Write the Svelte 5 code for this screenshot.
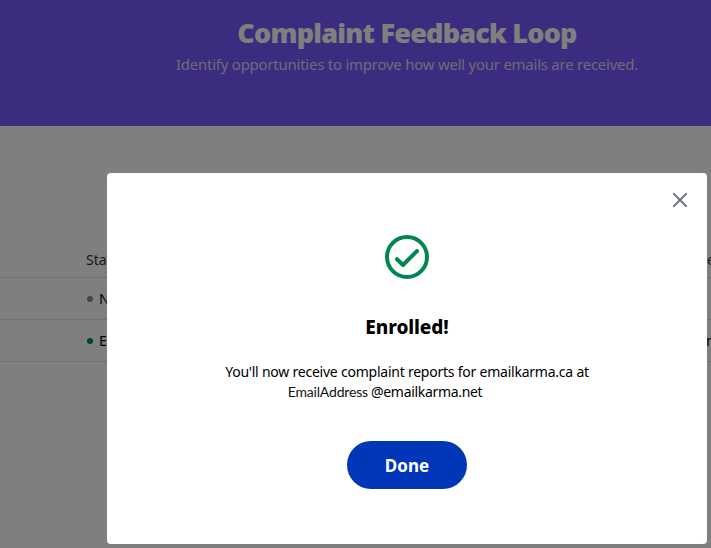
<script>
let open = true;

const rows = [
    { status: 'Not enrolled', enrolled: false, contact: '' },
    { status: 'Enrolled', enrolled: true, contact: 'm' }
];

function close() {
    open = false;
}
</script>

<div class="page">
    <header>
        <h1>Complaint Feedback Loop</h1>
        <p>Identify opportunities to improve how well your emails are received.</p>
    </header>

    <div class="table">
        <div class="row head">
            <span class="status">Status</span>
            <span class="contact">e</span>
        </div>
        {#each rows as row}
            <div class="row">
                <span class="status">
                    <i class="dot" class:enrolled={row.enrolled}></i>{row.status}
                </span>
                <span class="contact">{row.contact}</span>
            </div>
        {/each}
    </div>

    {#if open}
        <div class="overlay">
            <div class="modal" role="dialog" aria-modal="true">
                <button class="close" aria-label="Close" on:click={close}>
                    <svg width="16" height="16" viewBox="0 0 16 16">
                        <path d="M1.3 1.3 14.7 14.7M14.7 1.3 1.3 14.7" fill="none" stroke="#6e7780" stroke-width="2" />
                    </svg>
                </button>
                <svg class="check" width="44" height="44" viewBox="0 0 44 44" fill="none" stroke="#008751" stroke-width="4">
                    <circle cx="22" cy="22" r="20" />
                    <path d="M12 24.2 18 30 32 16" stroke-linecap="round" stroke-linejoin="round" />
                </svg>
                <h2>Enrolled!</h2>
                <p class="message">You'll now receive complaint reports for emailkarma.ca at</p>
                <p class="address"><span class="user">EmailAddress</span><span class="domain">@emailkarma.net</span></p>
                <button class="done" on:click={close}>Done</button>
            </div>
        </div>
    {/if}
</div>

<style>
    .page {
        position: relative;
        width: 100%;
        max-width: 711px;
        height: 548px;
        overflow: hidden;
        background: #fff;
        color: #000;
        font-family: "Noto Sans", sans-serif;
        font-size: 14px;
    }
    h1, h2, p {
        margin: 0;
        white-space: nowrap;
    }
    header {
        box-sizing: border-box;
        height: 126px;
        padding: 14px 0 0 103px;
        background: #7858fe;
        color: #fff;
        text-align: center;
    }
    h1 {
        font-size: 27px;
        font-weight: 900;
        letter-spacing: -0.78px;
        line-height: 38px;
    }
    header p {
        color: #dcd5f5;
        font-size: 15px;
        letter-spacing: -0.25px;
        line-height: 24px;
    }
    .table {
        padding-top: 109px;
    }
    .row {
        box-sizing: border-box;
        display: flex;
        align-items: center;
        height: 42px;
        padding-left: 86px;
        border-bottom: 1px solid #e0e0e4;
    }
    .head {
        height: 43px;
        padding-top: 6px;
        color: #2c363f;
    }
    .status {
        flex: none;
        display: flex;
        align-items: center;
        width: 620px;
    }
    .contact {
        flex: none;
        width: 5px;
        overflow: hidden;
    }
    .head .status {
        width: 621px;
    }
    .dot {
        width: 6px;
        height: 6px;
        margin: 1px 6px 0 1px;
        border-radius: 50%;
        background: #828a93;
    }
    .dot.enrolled {
        background: #008751;
    }
    .overlay {
        position: absolute;
        inset: 0;
        display: flex;
        align-items: flex-start;
        padding: 173px 4px 0 107px;
        background: rgba(0, 0, 0, 0.5);
    }
    .modal {
        position: relative;
        box-sizing: border-box;
        display: flex;
        flex-direction: column;
        align-items: center;
        width: 600px;
        height: 371px;
        padding-top: 62px;
        border-radius: 4px;
        background: #fff;
    }
    button {
        padding: 0;
        border: none;
        font-family: inherit;
        cursor: pointer;
    }
    .close {
        position: absolute;
        top: 19px;
        right: 19px;
        display: flex;
        background: none;
    }
    .check {
        display: block;
    }
    h2 {
        margin-top: 34px;
        font-size: 19px;
        font-weight: 800;
        letter-spacing: -0.1px;
        line-height: 28px;
    }
    .message {
        margin-top: 21px;
        letter-spacing: -0.23px;
        line-height: 20px;
    }
    .address {
        display: flex;
        align-items: baseline;
        margin-right: 44px;
        letter-spacing: -0.32px;
        line-height: 20px;
    }
    .user {
        margin-right: 3px;
        color: #111;
        font-family: Lato, sans-serif;
        letter-spacing: -0.17px;
    }
    .done {
        width: 120px;
        height: 48px;
        margin-top: 39px;
        border-radius: 24px;
        background: #0037b9;
        color: #fff;
        font-size: 17px;
        font-weight: 700;
    }
</style>
